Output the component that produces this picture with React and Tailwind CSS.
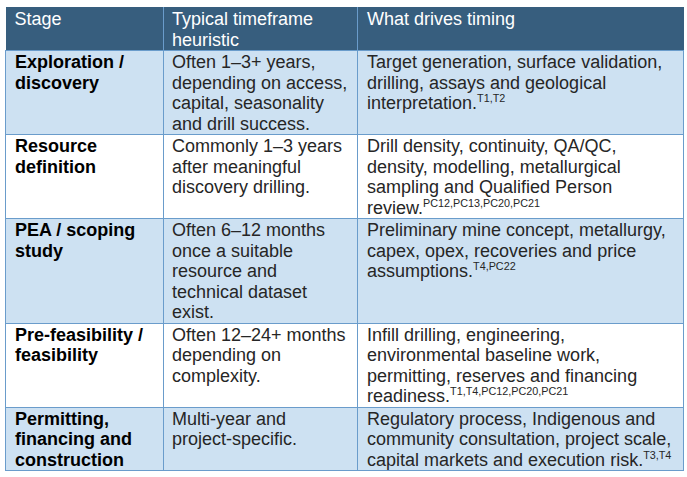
import React from "react";

const rows = [
  {
    stage: "Exploration / discovery",
    time: "Often 1–3+ years, depending on access, capital, seasonality and drill success.",
    drives: "Target generation, surface validation, drilling, assays and geological interpretation.",
    refs: "T1,T2",
  },
  {
    stage: "Resource definition",
    time: "Commonly 1–3 years after meaningful discovery drilling.",
    drives: "Drill density, continuity, QA/QC, density, modelling, metallurgical sampling and Qualified Person review.",
    refs: "PC12,PC13,PC20,PC21",
  },
  {
    stage: "PEA / scoping study",
    time: "Often 6–12 months once a suitable resource and technical dataset exist.",
    drives: "Preliminary mine concept, metallurgy, capex, opex, recoveries and price assumptions.",
    refs: "T4,PC22",
  },
  {
    stage: "Pre-feasibility / feasibility",
    time: "Often 12–24+ months depending on complexity.",
    drives: "Infill drilling, engineering, environmental baseline work, permitting, reserves and financing readiness.",
    refs: "T1,T4,PC12,PC20,PC21",
  },
  {
    stage: "Permitting, financing and construction",
    time: "Multi-year and project-specific.",
    drives: "Regulatory process, Indigenous and community consultation, project scale, capital markets and execution risk.",
    refs: "T3,T4",
  },
];

export default function App() {
  return (
    <div className="w-[687px] h-[477px] bg-white pt-[7px] pl-[5px] font-['Liberation_Sans',Arial,sans-serif] text-[18px] leading-[20.5px]">
      <table className="border-collapse table-fixed w-[678px]">
        <colgroup>
          <col className="w-[158px]" />
          <col className="w-[194px]" />
          <col className="w-[326px]" />
        </colgroup>
        <thead>
          <tr className="bg-[#375e7e] text-white align-top">
            <th className="font-normal text-left px-[9px] pt-[2px] pb-0 h-[43px] border-r border-[#6a9ccb]">Stage</th>
            <th className="font-normal text-left px-[8px] pt-[2px] pb-0 border-r border-[#6a9ccb]">Typical timeframe heuristic</th>
            <th className="font-normal text-left px-[9px] pt-[2px] pb-0">What drives timing</th>
          </tr>
        </thead>
        <tbody>
          {rows.map((r, i) => (
            <tr key={r.stage} className={i % 2 === 0 ? "bg-[#cde1f2] align-top" : "bg-white align-top"}>
              <td className="border border-[#6a9ccb] px-[9px] pt-[1px] pb-0 font-bold text-black">{r.stage}</td>
              <td className="border border-[#6a9ccb] px-[8px] pt-[1px] pb-0 text-[#262626]">{r.time}</td>
              <td className="border border-[#6a9ccb] px-[9px] pt-[1px] pb-0 text-[#262626]">
                {r.drives}
                <sup className="text-[10.8px] leading-none top-[-7px]">{r.refs}</sup>
              </td>
            </tr>
          ))}
        </tbody>
      </table>
    </div>
  );
}
